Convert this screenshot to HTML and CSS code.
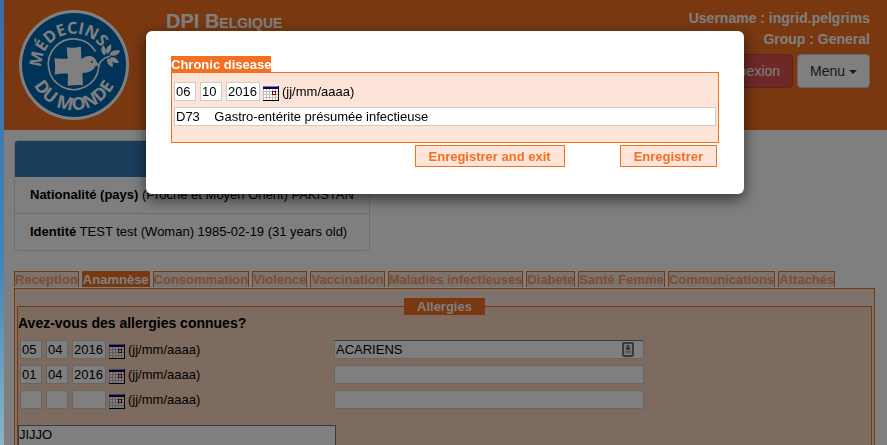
FILE: index.html
```html
<!DOCTYPE html>
<html lang="fr">
<head>
<meta charset="utf-8">
<title>DPI Belgique</title>
<link rel="stylesheet" href="styles.css">
</head>
<body>
<svg class="defs" aria-hidden="true">
  <symbol id="calendar" viewBox="0 0 16 15">
    <rect width="16" height="15" fill="#fff"/>
    <path d="M0 5.500h15M0 8.500h15M0 11.500h15M.5 2v12M3.500 3v11M6.500 3v11M9.500 3v11M12.500 3v11" stroke="#bbb"/>
    <path d="M0 0h16v3H0z" fill="#00007c"/>
    <path d="M0 .5h15" stroke="#888"/>
    <path d="M15.500 0v15M0 14.500h16" stroke="#000"/>
    <rect x="9.500" y="5.500" width="3" height="3" fill="#fff" stroke="#900000"/>
  </symbol>
</svg>
<div class="page">
  <header class="header">
    <svg class="logo" viewBox="57 30 330 330" role="img" aria-label="Médecins du Monde">
      <defs>
        <path id="top" d="M124 203a98 98 0 1 1 196 -8"/>
        <path id="bottom" d="M87 195a135 135 0 0 0 270 0"/>
      </defs>
      <circle cx="222" cy="195" r="165" fill="#fff"/>
      <circle cx="222" cy="195" r="156" fill="#0066b0"/>
      <g fill="none" stroke="#fff" stroke-width="5">
        <path d="M287 155A76 76 0 1 0 296 205"/>
        <path d="M296 205c-1-16 12-32 34-37"/>
      </g>
      <path fill="#fff" d="M200 142c15 3 30 0 43-2l1 37c8-6 15-9 23-9 13 0 20 8 23 17l8 11-12 3c-5 12-17 20-39 20l2 37c-15-2-30-2-46 2l1-37c-13-1-27 0-40 3 2-16 2-32-1-49 13 2 26 1 40 1z"/>
      <circle cx="275" cy="186" r="3" fill="#0066b0"/>
      <path fill="#fff" d="M314 166c-13-8-12-20-5-31 9 10 12 20 5 31zM320 163c-5-13 0-23 13-30 3 15-2 24-13 30zM328 166c3-13 15-18 33-14-7 14-19 18-33 14zM328 173c14-4 24 2 29 15-15 3-24-3-29-15zM322 175c12 3 19 12 16 27-14-6-19-15-16-27z"/>
      <g class="logo-text">
        <text font-size="49"><textPath href="#top" startOffset="0">MÉDECINS</textPath></text>
        <text font-size="53" text-anchor="middle"><textPath href="#bottom" startOffset="50%">DU MONDE</textPath></text>
      </g>
    </svg>
    <h1 class="title">DPI Belgique</h1>
    <div class="account">
      <div>Username : ingrid.pelgrims</div>
      <div>Group : General</div>
      <div class="account-actions">
        <button class="btn btn-danger" type="button">Déconnexion</button>
        <button class="btn btn-menu" type="button">Menu <span class="caret"></span></button>
      </div>
    </div>
  </header>

  <main class="content">
    <section class="patient">
      <div class="patient-head"></div>
      <div class="patient-row"><b>Nationalité (pays)</b> (Proche et Moyen Orient) PAKISTAN</div>
      <div class="patient-row"><b>Identité</b> TEST test (Woman) 1985-02-19 (31 years old)</div>
    </section>

    <nav class="tabs">
      <a href="#">Reception</a>
      <a href="#" class="active">Anamnèse</a>
      <a href="#">Consommation</a>
      <a href="#">Violence</a>
      <a href="#">Vaccination</a>
      <a href="#">Maladies infectieuses</a>
      <a href="#">Diabete</a>
      <a href="#">Santé Femme</a>
      <a href="#">Communications</a>
      <a href="#">Attachés</a>
    </nav>

    <div class="pane">
      <fieldset class="group">
        <legend>Allergies</legend>
        <h2 class="question">Avez-vous des allergies connues?</h2>
        <div class="entry">
          <div class="date">
            <input class="part" aria-label="Jour" value="05"><input class="part" aria-label="Mois" value="04"><input class="part year" aria-label="Année" value="2016">
            <svg class="cal"><use href="#calendar"/></svg><span>(jj/mm/aaaa)</span>
          </div>
          <div class="allergy">
            <input class="field autofill" aria-label="Allergie" value="ACARIENS">
            <svg class="contact" viewBox="0 0 12 15"><rect x="1" y="1" width="10" height="13" rx="1" fill="#eee" stroke="#777" stroke-width="2"/><path d="M5 3h2v2h1v3H4V5h1z" fill="#777"/><path d="M4 9h5v2H4z" fill="#aaa"/></svg>
          </div>
        </div>
        <div class="entry">
          <div class="date">
            <input class="part" aria-label="Jour" value="01"><input class="part" aria-label="Mois" value="04"><input class="part year" aria-label="Année" value="2016">
            <svg class="cal"><use href="#calendar"/></svg><span>(jj/mm/aaaa)</span>
          </div>
          <div class="allergy"><input class="field" aria-label="Allergie"></div>
        </div>
        <div class="entry">
          <div class="date">
            <input class="part" aria-label="Jour"><input class="part" aria-label="Mois"><input class="part year" aria-label="Année">
            <svg class="cal"><use href="#calendar"/></svg><span>(jj/mm/aaaa)</span>
          </div>
          <div class="allergy"><input class="field" aria-label="Allergie"></div>
        </div>
        <textarea class="notes" aria-label="Remarques">JIJJO</textarea>
      </fieldset>
    </div>
  </main>
</div>

<div class="overlay">
  <form class="modal" role="dialog" aria-labelledby="modal-title">
    <h2 class="modal-title" id="modal-title">Chronic disease</h2>
    <div class="modal-box">
      <div class="date">
        <input class="part" aria-label="Jour" value="06"><input class="part" aria-label="Mois" value="10"><input class="part year" aria-label="Année" value="2016">
        <svg class="cal"><use href="#calendar"/></svg><span>(jj/mm/aaaa)</span>
      </div>
      <input class="field" aria-label="Diagnostic" value="D73&nbsp;&nbsp;&nbsp; Gastro-entérite présumée infectieuse">
    </div>
    <div class="modal-actions">
      <button type="button">Enregistrer and exit</button>
      <button type="button">Enregistrer</button>
    </div>
  </form>
</div>
</body>
</html>
```
FILE: styles.css
```css
* { box-sizing: border-box; }

body {
  margin: 0;
  min-height: 100vh;
  padding-left: 4px;
  overflow: hidden;
  background: linear-gradient(#3a6ea6, #4585b4 60%, #8cb4c4);
  color: #000;
  font: 13px/15px "Liberation Sans", Arial, sans-serif;
}

input, textarea, button { font: inherit; color: inherit; }
h1, h2 { margin: 0; }
.defs { display: none; }

.page { height: 100vh; overflow: hidden; background: #fff; }

.header {
  display: flex;
  height: 130px;
  padding: 10px 17px 0 15px;
  background: #f37021;
  color: #fff;
}
.logo { width: 110px; height: 110px; }
.logo-text { fill: #fff; font-family: "Open Sans", sans-serif; font-weight: 700; }
.title { margin-left: 37px; font-size: 20px; line-height: 22px; font-variant: small-caps; }
.account {
  margin-left: auto;
  margin-top: -2px;
  font-size: 14px;
  line-height: 21px;
  font-weight: bold;
  text-align: right;
}
.account-actions { display: flex; justify-content: flex-end; gap: 4px; margin-top: 4px; }
.btn {
  height: 34px;
  padding: 0 12px;
  border: 1px solid #ccc;
  border-radius: 4px;
  background: #fff;
  color: #333;
  font-size: 14px;
  font-weight: normal;
}
.btn-danger { border-color: #d43f3a; background: #d9534f; color: #fff; }
.caret {
  display: inline-block;
  border: 4px solid transparent;
  border-top-color: #333;
  border-bottom: 0;
  vertical-align: middle;
}

.content { padding: 10px 12px 0 10px; }
.patient { width: 356px; border: 1px solid #ddd; border-radius: 4px; overflow: hidden; }
.patient-head { height: 37px; margin: -1px -1px 0; background: #337ab7; }
.patient-row { padding: 10px 15px 11px; }
.patient-row + .patient-row { border-top: 1px solid #ddd; }

.tabs { display: flex; gap: 3px; margin-top: 20px; }
.tabs a {
  height: 16px;
  border: 1px solid #f37021;
  border-bottom: 0;
  background: #fde4d8;
  color: #f59a68;
  font-weight: bold;
  text-decoration: none;
  white-space: nowrap;
}
.tabs .active { background: #f37021; color: #fff; }

.pane { margin-top: 1px; padding: 9px 2px 2px; border: 1px solid #f37021; background: #fde4d8; }
.group { min-width: 0; margin: 0; padding: 0; border: 1px solid #f37021; background: #fdd6be; }
.group legend {
  margin: 0 auto;
  padding: 1px 13px;
  background: #f37021;
  color: #fff;
  font-weight: bold;
}
.question { margin-bottom: 8px; font-size: 14px; line-height: 17px; }
.entry { display: flex; margin: 0 0 6px 2px; }

.date { display: flex; align-items: center; width: 314px; }
.part { width: 22px; margin-right: 4px; }
.part, .field { height: 19px; padding: 0 1px; border: 1px solid #ccc; background: #fff; }
.part.year { width: 34px; margin-right: 3px; }
.cal { width: 16px; height: 15px; margin: 3px 3px 0 0; }

.allergy { position: relative; width: 310px; }
.field { display: block; width: 100%; }
.autofill { border-color: #777 #ccc #ccc; }
.contact { position: absolute; top: 2px; right: 10px; width: 12px; height: 15px; }
.notes {
  display: block;
  width: 318px;
  height: 60px;
  margin-top: 16px;
  padding: 1px 0;
  border: 1px solid #777;
  background: #fff;
  resize: none;
}

.overlay { position: fixed; inset: 0 0 0 4px; padding: 31px 143px 0 142px; background: rgba(0, 0, 0, .5); }
.modal {
  padding: 25px 25px 27px;
  border-radius: 6px;
  background: #fff;
  box-shadow: 0 5px 15px rgba(0, 0, 0, .6);
}
.modal-title {
  width: fit-content;
  padding-top: 1px;
  background: #f37021;
  color: #fff;
  font-size: 13px;
  line-height: 15px;
}
.modal-box { padding: 9px 2px 16px; border: 1px solid #f37021; background: #fde4d8; }
.modal-box .field { margin-top: 6px; }
.modal-actions { display: flex; justify-content: flex-end; gap: 55px; padding: 2px 2px 0 0; }
.modal-actions button {
  height: 22px;
  padding: 0 13px;
  border: 1px solid #f37021;
  background: #fde4d8;
  color: #f37021;
  font-weight: bold;
}
```
